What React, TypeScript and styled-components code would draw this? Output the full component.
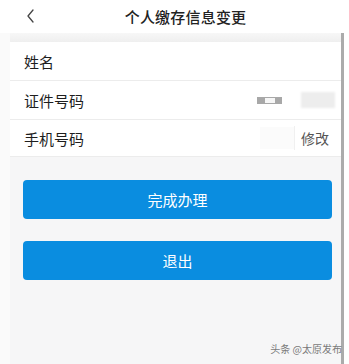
import * as React from 'react';
import styled, { createGlobalStyle } from 'styled-components';

const Global = createGlobalStyle`
  html, body {
    margin: 0;
    padding: 0;
    background: #ffffff;
    font-family: "Noto Sans CJK SC", "Noto Sans", sans-serif;
  }
`;

const Screen = styled.div`
  width: 349px;
  height: 364px;
  display: flex;
  flex-direction: column;
  overflow: hidden;
  position: relative;
`;

const Header = styled.header`
  height: 33px;
  flex: none;
  display: flex;
  align-items: center;
  justify-content: center;
  position: relative;
  background: #ffffff;
`;

const BackButton = styled.span`
  position: absolute;
  left: 24px;
  top: 8px;
  width: 14px;
  height: 16px;
  display: flex;
`;

const Title = styled.h1`
  margin: 0 0 0 22px;
  font-size: 15px;
  font-weight: 500;
  color: #222222;
  letter-spacing: 0.2px;
`;

const Body = styled.div`
  flex: 1;
  display: flex;
`;

const LeftGutter = styled.div`
  width: 10px;
  background: #fafafa;
`;

const Main = styled.main`
  width: 331px;
  display: flex;
  flex-direction: column;
  background: #f6f6f7;
`;

const TopStrip = styled.div`
  height: 9px;
  background: linear-gradient(#f7f7f7, #efefef);
`;

const Divider = styled.div`
  width: 3px;
  background: #ababab;
`;

const RightGutter = styled.div`
  width: 5px;
  background: #ffffff;
`;

const List = styled.section`
  background: #ffffff;
  border-bottom: 1px solid #ececec;
`;

const Row = styled.div<{ $height: number }>`
  height: ${(p) => p.$height}px;
  display: flex;
  align-items: center;
  padding-left: 14px;
  padding-right: 6px;
  border-bottom: 1px solid #ececec;
  &:last-child {
    border-bottom: none;
  }
`;

const Label = styled.span`
  flex: 1;
  font-size: 15px;
  color: #1e1e1e;
`;

const IdMask = styled.span`
  width: 25px;
  height: 7px;
  background: #a8a8a8;
  display: flex;
  align-items: center;
  padding-left: 8px;
  box-sizing: border-box;
  margin-right: 19px;
`;

const IdMaskInner = styled.span`
  width: 10px;
  height: 5px;
  background: #f6f6f6;
`;

const Blur = styled.span`
  width: 34px;
  height: 16px;
  background: #ededed;
  filter: blur(1px);
`;

const EditZone = styled.span`
  display: flex;
  align-items: center;
  height: 100%;
`;

const EditBlank = styled.span`
  width: 34px;
  height: 22px;
  background: #fbfbfb;
`;

const EditLink = styled.span`
  font-size: 14px;
  color: #555555;
  padding: 0 6px 0 6px;
  border-left: 1px solid #f0f0f0;
  line-height: 24px;
`;

const Actions = styled.div`
  display: flex;
  flex-direction: column;
  gap: 22px;
  padding: 23px 9px 0 13px;
`;

const PrimaryButton = styled.button`
  height: 39px;
  border: none;
  border-radius: 4px;
  background: #0a8de0;
  color: #ffffff;
  font-family: inherit;
  font-size: 15px;
  padding: 0;
`;

const Watermark = styled.span`
  position: absolute;
  right: 7px;
  bottom: 8px;
  font-size: 10px;
  color: #7a7a7a;
`;

const ChevronLeft = () => (
  <svg width="14" height="16" viewBox="0 0 14 16" fill="none">
    <path d="M9 2 L4 8 L9 14" stroke="#444" strokeWidth="1.3" strokeLinecap="round" strokeLinejoin="round" />
  </svg>
);

export default function App() {
  return (
    <Screen>
      <Global />
      <Header>
        <BackButton>
          <ChevronLeft />
        </BackButton>
        <Title>个人缴存信息变更</Title>
      </Header>
      <Body>
        <LeftGutter />
        <Main>
          <TopStrip />
          <List>
            <Row $height={38}>
              <Label>姓名</Label>
            </Row>
            <Row $height={38}>
              <Label>证件号码</Label>
              <IdMask>
                <IdMaskInner />
              </IdMask>
              <Blur />
            </Row>
            <Row $height={36}>
              <Label>手机号码</Label>
              <EditZone>
                <EditBlank />
                <EditLink>修改</EditLink>
              </EditZone>
            </Row>
          </List>
          <Actions>
            <PrimaryButton>完成办理</PrimaryButton>
            <PrimaryButton>退出</PrimaryButton>
          </Actions>
        </Main>
        <Divider />
        <RightGutter />
      </Body>
      <Watermark>头条 @太原发布</Watermark>
    </Screen>
  );
}
